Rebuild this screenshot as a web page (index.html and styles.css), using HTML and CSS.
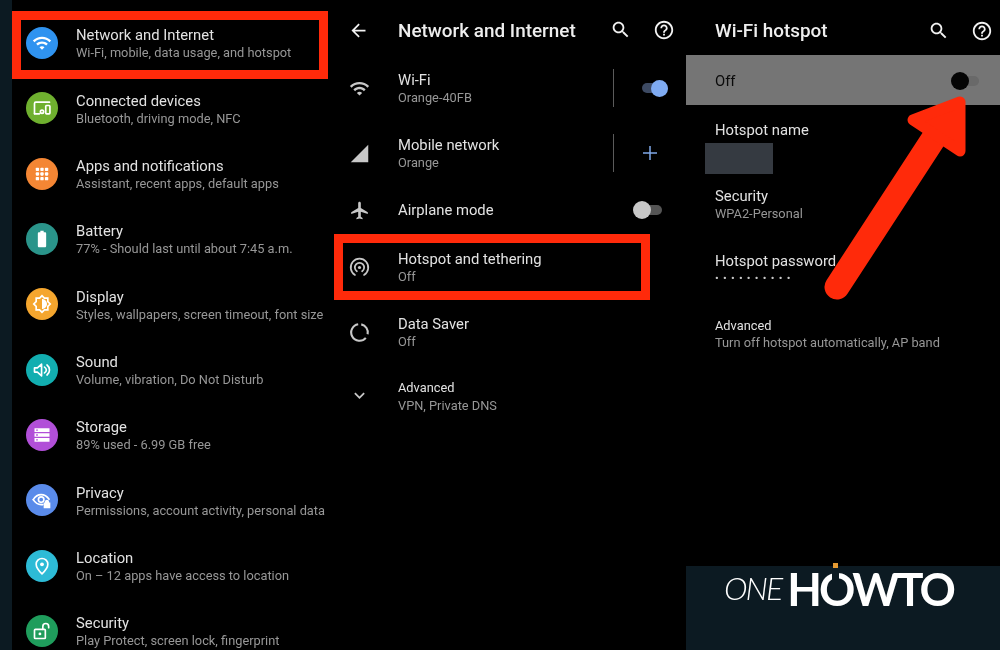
FILE: index.html
```html
<!DOCTYPE html>
<html lang="en">
<head>
<meta charset="utf-8">
<title>Wi-Fi hotspot settings</title>
<link rel="stylesheet" href="styles.css">
</head>
<body>
<div class="screen">
  <div class="rail"></div>

  <section class="panel panel-main">
    <div class="row"><div class="badge c-blue"><svg viewBox="0 0 24 24"><path class="f" d="M1 9l2 2c4.97-4.97 13.03-4.97 18 0l2-2C16.93 2.93 7.08 2.93 1 9zm8 8l3 3 3-3c-1.65-1.66-4.34-1.66-6 0zm-4-4l2 2c2.76-2.76 7.24-2.76 10 0l2-2C15.14 9.14 8.87 9.14 5 13z"/></svg></div><div class="txt"><div class="t">Network and Internet</div><div class="s">Wi-Fi, mobile, data usage, and hotspot</div></div></div>
    <div class="row"><div class="badge c-green"><svg viewBox="0 0 24 24"><path class="l" d="M3 19V6.500C3 5.700 3.700 5 4.500 5H21"/><path class="l" d="M3 19h6"/><circle class="l" cx="12" cy="16.500" r="2"/><rect class="l" x="16.500" y="9" width="5" height="10" rx="1"/></svg></div><div class="txt"><div class="t">Connected devices</div><div class="s">Bluetooth, driving mode, NFC</div></div></div>
    <div class="row"><div class="badge c-orange"><svg viewBox="0 0 24 24"><g class="f"><rect x="4.500" y="4.500" width="4" height="4" rx="1"/><rect x="10" y="4.500" width="4" height="4" rx="1"/><rect x="15.500" y="4.500" width="4" height="4" rx="1"/><rect x="4.500" y="10" width="4" height="4" rx="1"/><rect x="10" y="10" width="4" height="4" rx="1"/><rect x="15.500" y="10" width="4" height="4" rx="1"/><rect x="4.500" y="15.500" width="4" height="4" rx="1"/><rect x="10" y="15.500" width="4" height="4" rx="1"/><rect x="15.500" y="15.500" width="4" height="4" rx="1"/></g></svg></div><div class="txt"><div class="t">Apps and notifications</div><div class="s">Assistant, recent apps, default apps</div></div></div>
    <div class="row"><div class="badge c-teal"><svg viewBox="0 0 24 24"><path class="f" d="M10 2h4v2h1.500c.8 0 1.500.7 1.500 1.500v15c0 .8-.7 1.500-1.500 1.500h-7C7.700 22 7 21.300 7 20.500v-15C7 4.700 7.700 4 8.500 4H10z"/></svg></div><div class="txt"><div class="t">Battery</div><div class="s">77% - Should last until about 7:45 a.m.</div></div></div>
    <div class="row"><div class="badge c-amber"><svg viewBox="0 0 24 24"><path class="f" d="M20 15.310L23.310 12 20 8.690V4h-4.690L12 .69 8.690 4H4v4.690L.69 12 4 15.310V20h4.690L12 23.310 15.310 20H20v-4.690zm-2-.83V18h-3.520L12 20.480 9.520 18H6v-3.520L3.520 12 6 9.520V6h3.520L12 3.520 14.480 6H18v3.520L20.480 12 18 14.480zM12 6v12c3.310 0 6-2.690 6-6s-2.690-6-6-6z"/></svg></div><div class="txt"><div class="t">Display</div><div class="s">Styles, wallpapers, screen timeout, font size</div></div></div>
    <div class="row"><div class="badge c-cyan"><svg viewBox="0 0 24 24"><path class="l" d="M3 9.500v5h3.500l5 4.500V5L6.500 9.500H3z"/><path class="l" d="M15 8.500c1.500 1 2.200 2.200 2.200 3.500s-.7 2.500-2.200 3.500"/><path class="l" d="M18 6c2 1.500 3 3.500 3 6s-1 4.500-3 6"/></svg></div><div class="txt"><div class="t">Sound</div><div class="s">Volume, vibration, Do Not Disturb</div></div></div>
    <div class="row"><div class="badge c-purple"><svg viewBox="0 0 24 24"><path class="f" fill-rule="evenodd" d="M3 4h18v4.500H3zM5 5.500v1.500h2V5.500zM3 9.800h18v4.400H3zM5 11.200v1.600h2v-1.600zM3 15.500h18V20H3zM5 17v1.500h2V17z"/></svg></div><div class="txt"><div class="t">Storage</div><div class="s">89% used - 6.99 GB free</div></div></div>
    <div class="row"><div class="badge c-indigo"><svg viewBox="0 0 24 24"><path class="l" d="M1.500 11.500C4 7.500 7.500 5.500 11 5.500s7 2 9.500 5.500"/><path class="l" d="M1.500 11.500C4 15.500 7.500 17.500 11 17.500h2"/><circle class="l" cx="11" cy="11.500" r="3.300"/><path class="f" d="M15.500 15v-.8a2.500 2.500 0 0 1 5 0v.8h1.500v7h-8v-7z"/></svg></div><div class="txt"><div class="t">Privacy</div><div class="s">Permissions, account activity, personal data</div></div></div>
    <div class="row"><div class="badge c-sky"><svg viewBox="0 0 24 24"><path class="l" d="M12 3c-3.900 0-7 3-7 7 0 4.800 7 11.500 7 11.500S19 14.800 19 10c0-4-3.100-7-7-7z"/><circle class="f" cx="12" cy="10" r="2.300"/></svg></div><div class="txt"><div class="t">Location</div><div class="s">On – 12 apps have access to location</div></div></div>
    <div class="row"><div class="badge c-emerald"><svg viewBox="0 0 24 24"><rect class="l" x="3" y="10" width="13" height="11" rx="1"/><circle class="f" cx="9.500" cy="15.500" r="1.700"/><path class="l" d="M13 10V6.500a3.500 3.500 0 0 1 7 0V8"/></svg></div><div class="txt"><div class="t">Security</div><div class="s">Play Protect, screen lock, fingerprint</div></div></div>
  </section>

  <section class="panel panel-net">
    <header class="bar">
      <svg class="back" viewBox="0 0 24 24"><path class="f" d="M20 11H7.830l5.590-5.590L12 4l-8 8 8 8 1.410-1.410L7.830 13H20v-2z"/></svg>
      <h1 class="bar-title">Network and Internet</h1>
      <svg class="ico" viewBox="0 0 24 24"><path class="f" d="M15.500 14h-.79l-.28-.27C15.410 12.590 16 11.110 16 9.500 16 5.910 13.090 3 9.500 3S3 5.910 3 9.500 5.910 16 9.500 16c1.610 0 3.090-.59 4.230-1.570l.27.28v.79l5 4.990L20.490 19l-4.990-5zm-6 0C7.010 14 5 11.990 5 9.500S7.010 5 9.500 5 14 7.010 14 9.500 11.990 14 9.500 14z"/></svg>
      <svg class="help" viewBox="0 0 24 24"><path class="f" d="M11 18h2v-2h-2v2zm1-16C6.480 2 2 6.480 2 12s4.480 10 10 10 10-4.480 10-10S17.520 2 12 2zm0 18c-4.410 0-8-3.590-8-8s3.590-8 8-8 8 3.590 8 8-3.590 8-8 8zm0-14c-2.210 0-4 1.790-4 4h2c0-1.100.9-2 2-2s2 .9 2 2c0 2-3 1.750-3 5h2c0-2.250 3-2.500 3-5 0-2.210-1.790-4-4-4z"/></svg>
    </header>
    <div class="row row-net"><svg class="lead" viewBox="0 0 24 24"><path class="f" d="M1 9l2 2c4.970-4.970 13.030-4.970 18 0l2-2C16.930 2.930 7.080 2.930 1 9zm8 8l3 3 3-3c-1.650-1.660-4.340-1.660-6 0zm-4-4l2 2c2.760-2.760 7.240-2.760 10 0l2-2C15.140 9.140 8.870 9.140 5 13z"/></svg><div class="txt grow"><div class="t">Wi-Fi</div><div class="s">Orange-40FB</div></div><div class="divider"></div><div class="end"><div class="toggle on"><span class="track"></span><span class="thumb"></span></div></div></div>
    <div class="row row-net"><svg class="lead" viewBox="0 0 24 24"><path class="f" d="M2 22h20V2z"/></svg><div class="txt grow"><div class="t">Mobile network</div><div class="s">Orange</div></div><div class="divider"></div><div class="end"><svg class="plus" viewBox="0 0 16 16"><path d="M8 1v14M1 8h14"/></svg></div></div>
    <div class="row row-net row-single"><svg class="lead" viewBox="0 0 24 24"><path class="f" d="M21.500 16v-2l-8-5V3.500C13.500 2.670 12.830 2 12 2s-1.500.67-1.500 1.500V9l-8 5v2l8-2.500V19l-2 1.500V22l3.500-1 3.500 1v-1.500l-2-1.500v-5.500l8 2.500z"/></svg><div class="txt grow"><div class="t">Airplane mode</div></div><div class="toggle off"><span class="track"></span><span class="thumb"></span></div></div>
    <div class="row row-net"><svg class="lead" viewBox="0 0 24 24"><g class="l"><path d="M6.800 20.500a10 10 0 1 1 10.400 0"/><path d="M9 16.300a5.300 5.300 0 1 1 6 0"/></g><circle class="f" cx="12" cy="12" r="1.800"/></svg><div class="txt grow"><div class="t">Hotspot and tethering</div><div class="s">Off</div></div></div>
    <div class="row row-net"><svg class="lead" viewBox="0 0 24 24"><g class="l ring"><path d="M14 2.700a9.500 9.500 0 0 1 7.300 11.300"/><path d="M19.200 18.200A9.500 9.500 0 1 1 10.500 2.600"/></g></svg><div class="txt grow"><div class="t">Data Saver</div><div class="s">Off</div></div></div>
    <div class="row row-net row-adv"><svg class="lead" viewBox="0 0 24 24"><path class="f" d="M16.590 8.590L12 13.170 7.410 8.590 6 10l6 6 6-6z"/></svg><div class="txt grow"><div class="t t-small">Advanced</div><div class="s">VPN, Private DNS</div></div></div>
  </section>

  <section class="panel panel-hot">
    <header class="bar bar-hot">
      <h1 class="bar-title">Wi-Fi hotspot</h1>
      <svg class="ico" viewBox="0 0 24 24"><path class="f" d="M15.500 14h-.79l-.28-.27C15.410 12.590 16 11.110 16 9.500 16 5.910 13.090 3 9.500 3S3 5.910 3 9.500 5.910 16 9.500 16c1.610 0 3.090-.59 4.230-1.570l.27.28v.79l5 4.990L20.490 19l-4.990-5zm-6 0C7.010 14 5 11.990 5 9.500S7.010 5 9.500 5 14 7.010 14 9.500 11.990 14 9.500 14z"/></svg>
      <svg class="help" viewBox="0 0 24 24"><path class="f" d="M11 18h2v-2h-2v2zm1-16C6.480 2 2 6.480 2 12s4.480 10 10 10 10-4.480 10-10S17.520 2 12 2zm0 18c-4.410 0-8-3.590-8-8s3.590-8 8-8 8 3.590 8 8-3.590 8-8 8zm0-14c-2.210 0-4 1.790-4 4h2c0-1.100.9-2 2-2s2 .9 2 2c0 2-3 1.750-3 5h2c0-2.250 3-2.500 3-5 0-2.210-1.790-4-4-4z"/></svg>
    </header>
    <div class="master"><span class="master-label">Off</span><div class="toggle dark"><span class="track"></span><span class="thumb"></span></div></div>
    <div class="field field-name"><div class="t">Hotspot name</div><div class="redact"></div></div>
    <div class="field"><div class="t">Security</div><div class="s">WPA2-Personal</div></div>
    <div class="field"><div class="t">Hotspot password</div><div class="s dots">••••••••••</div></div>
    <div class="field field-last"><div class="t t-small">Advanced</div><div class="s">Turn off hotspot automatically, AP band</div></div>
    <footer class="brand">
      <span class="brand-one">ONE</span><span class="brand-how">H<span class="brand-o">O<i class="brand-cut"></i><i class="brand-dot"></i></span>WTO</span>
    </footer>
  </section>

  <div class="mark mark-a"></div>
  <div class="mark mark-b"></div>
  <svg class="arrow" viewBox="0 0 1000 650"><path class="shaft" d="M837 287L934 138"/><path class="head" d="M913 120L960 102V151z"/></svg>
</div>
</body>
</html>
```

FILE: styles.css
```css
* { box-sizing: border-box; }
html, body { margin: 0; padding: 0; background: #000; }
body { font-family: Roboto, "Liberation Sans", sans-serif; }

.screen {
  position: relative;
  display: flex;
  width: 1000px;
  height: 650px;
  overflow: hidden;
  background: #000;
  filter: blur(.35px);
}

.rail { width: 12px; background: #0c1a22; flex: none; }
.panel { display: flex; flex-direction: column; flex: none; }
.panel-main { width: 322px; padding-top: 10.3px; }
.panel-net { width: 352px; }
.panel-hot { width: 314px; }

svg .f, .f { fill: currentColor; }
svg .l, .l { fill: none; stroke: currentColor; stroke-width: 2; stroke-linejoin: round; stroke-linecap: round; }
svg .ring { stroke-width: 2.400; stroke-linecap: butt; }

.row { display: flex; align-items: center; height: 65.33px; flex: none; }
.panel-main .row { padding-left: 14px; }
.panel-main .txt { padding-top: 3px; }

.badge {
  width: 32px; height: 32px; border-radius: 50%;
  display: flex; align-items: center; justify-content: center;
  color: #fff; flex: none; margin-right: 18px;
}
.badge svg { width: 20px; height: 20px; }
.c-blue { background: #2f93f0; }
.c-green { background: #6fb02f; }
.c-orange { background: #f48634; }
.c-teal { background: #2a948a; }
.c-amber { background: #f5a62e; }
.c-cyan { background: #12aeb0; }
.c-purple { background: #b14fd8; }
.c-indigo { background: #5a8bea; }
.c-sky { background: #2dbbd6; }
.c-emerald { background: #1f9d5c; }

.txt { min-width: 0; padding-top: 1px; }
.grow { flex: 1; }
.t { font-size: 14.800px; line-height: 18px; color: #e2e2e2; white-space: nowrap; }
.t-small { font-size: 12.800px; }
.s { font-size: 12.800px; line-height: 18px; color: #979797; white-space: nowrap; }

.bar { height: 56px; display: flex; align-items: center; padding: 4px 11px 0 14px; color: #f2f2f2; flex: none; }
.bar-hot { height: 55px; padding: 6px 7px 0 29px; }
.bar-title { flex: 1; margin: 0; font-size: 18.900px; font-weight: 500; color: #eeeeee; white-space: nowrap; }
.ico { width: 21.500px; height: 21.500px; flex: none; }
.back { width: 21px; height: 21px; margin-right: 29px; flex: none; }
.help { width: 22px; height: 22px; margin-left: 21.500px; flex: none; }

.row-net { padding-left: 14.500px; padding-right: 18px; }
.row-single { height: 47.500px; }
.row-single .txt { padding-top: 0; }
.row-adv { height: 61px; }
.row-adv .txt { padding-top: 3px; }
.row-net + .row-single + .row-net { height: 66px; }
.lead { width: 21px; height: 21px; color: #c8c8c8; flex: none; margin-right: 28.500px; }
.divider { width: 1px; height: 38px; background: #5b5b5b; flex: none; margin-top: -1px; }
.end { width: 54px; display: flex; justify-content: flex-end; flex: none; }
.plus { width: 16px; height: 16px; margin-right: 10px; margin-top: -1px; fill: none; stroke: #7fa8e8; stroke-width: 1.500; }

.toggle { position: relative; width: 28px; height: 18px; flex: none; }
.track { position: absolute; left: 2px; right: 0; top: 4px; height: 10px; border-radius: 5px; }
.thumb { position: absolute; top: 1px; width: 16px; height: 16px; border-radius: 50%; }
.on { margin-top: -2px; }
.on .track { background: #3d4a63; }
.on .thumb { right: 0; width: 17px; height: 17px; background: #7fabf2; }
.off { width: 29px; margin-right: 6px; margin-top: -1px; }
.off .track { background: #555; }
.off .thumb { left: 0; top: 0; width: 18px; height: 18px; background: #c8c8c8; }
.dark { width: 28px; }
.dark .track { background: #696969; }
.dark .thumb { left: 0; top: 0; width: 18px; height: 18px; background: #050505; }

.master {
  display: flex; align-items: center; justify-content: space-between;
  height: 50px; background: #757575; padding: 2px 21px 0 29px; flex: none;
}
.master-label { font-size: 14.800px; color: #0a0a0a; }

.field { padding-left: 29px; height: 65.33px; padding-top: 14px; flex: none; }
.field .t { line-height: 17px; }
.field-name { height: 69px; padding-top: 17px; }
.field-last { padding-top: 12px; }
.redact { width: 68px; height: 31px; margin: 4px 0 0 -10px; background: #353a41; }
.dots { font-size: 11px; letter-spacing: 4.250px; color: #c8c8c8; }

.brand {
  position: relative;
  margin-top: auto; height: 84px; flex: none;
  background: #0c1a22; color: #fff;
  display: flex; align-items: flex-start; padding: 0 0 0 38px;
  line-height: 46px;
}
.brand-one { font-family: Lato, sans-serif; font-size: 32px; font-weight: 300; font-style: italic; letter-spacing: -2px; margin-right: 6px; margin-top: -1px; }
.brand-how { font-family: Lato, sans-serif; font-size: 45px; font-weight: 700; letter-spacing: -3px; }
.brand-o { position: relative; display: inline-block; }
.brand-cut { position: absolute; left: 50%; top: 2px; width: 7px; height: 12px; margin-left: -4px; background: #0c1a22; }
.brand-dot { position: absolute; left: 50%; top: -3px; width: 5px; height: 5px; margin-left: -3px; background: #e59a32; }

.mark { position: absolute; border: 9.500px solid #ff2a0a; }
.mark-a { left: 12px; top: 11px; width: 316px; height: 68px; }
.mark-b { left: 334px; top: 234px; width: 316px; height: 66px; }

.arrow { position: absolute; left: 0; top: 0; width: 1000px; height: 650px; }
.shaft { fill: none; stroke: #ff2a0a; stroke-width: 25; stroke-linecap: round; }
.head { fill: #ff2a0a; stroke: #ff2a0a; stroke-width: 11; stroke-linejoin: round; }
```
